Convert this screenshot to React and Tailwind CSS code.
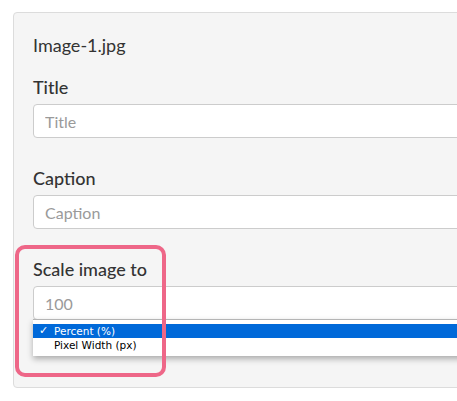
export default function App() {
  const lato = { fontFamily: 'Lato, "Open Sans", sans-serif' };
  return (
    <div className="w-[457px] h-[401px] overflow-hidden bg-white relative" style={lato}>
      <div className="pt-[12px] pl-[13px]">
        <div className="w-[470px] bg-[#f5f5f5] border border-[#dcdcdc] rounded-[4px] pl-[19px] pt-[21px] pb-[67px] text-[#333]">
          <div className="text-[18px] leading-[22px]">Image-1.jpg</div>

          <div className="mt-[20px] text-[18px] leading-[22px] font-medium">Title</div>
          <input
            className="mt-[6px] block w-[440px] h-[34px] bg-white border border-[#ccc] rounded-[4px] px-[11px] text-[16px] placeholder:text-[#9a9a9a] outline-none"
            placeholder="Title"
          />

          <div className="mt-[29px] text-[18px] leading-[22px] font-medium">Caption</div>
          <input
            className="mt-[6px] block w-[440px] h-[34px] bg-white border border-[#ccc] rounded-[4px] px-[11px] text-[16px] placeholder:text-[#9a9a9a] outline-none"
            placeholder="Caption"
          />

          <div className="mt-[29px] text-[18px] leading-[22px] font-medium">Scale image to</div>
          <div className="relative mt-[6px]">
            <input
              className="block w-[440px] h-[34px] bg-white border border-[#ccc] rounded-[4px] px-[11px] text-[16px] placeholder:text-[#9a9a9a] outline-none"
              placeholder="100"
            />
            {/* native select popup */}
            <div
              className="absolute left-0 top-[33px] w-[440px] bg-white border-t border-[#b5b5b5] pt-[4px] pb-[4px] shadow-[0_3px_6px_rgba(0,0,0,0.3)] text-[10.5px] leading-[14px]"
              style={{ fontFamily: '"DejaVu Sans", "Liberation Sans", sans-serif' }}
            >
              <div className="flex items-center h-[14px] bg-[#0069d9] text-white">
                <span className="w-[21px] pl-[6px] text-[11px] font-bold">✓</span>
                <span>Percent (%)</span>
              </div>
              <div className="flex items-center h-[14px] text-black">
                <span className="w-[21px]"></span>
                <span>Pixel Width (px)</span>
              </div>
            </div>
          </div>
        </div>
      </div>

      {/* annotation highlight */}
      <div className="absolute left-[15px] top-[245px] w-[151px] h-[132px] border-[4px] border-[#ee6788] rounded-[10px] pointer-events-none" />
    </div>
  );
}
